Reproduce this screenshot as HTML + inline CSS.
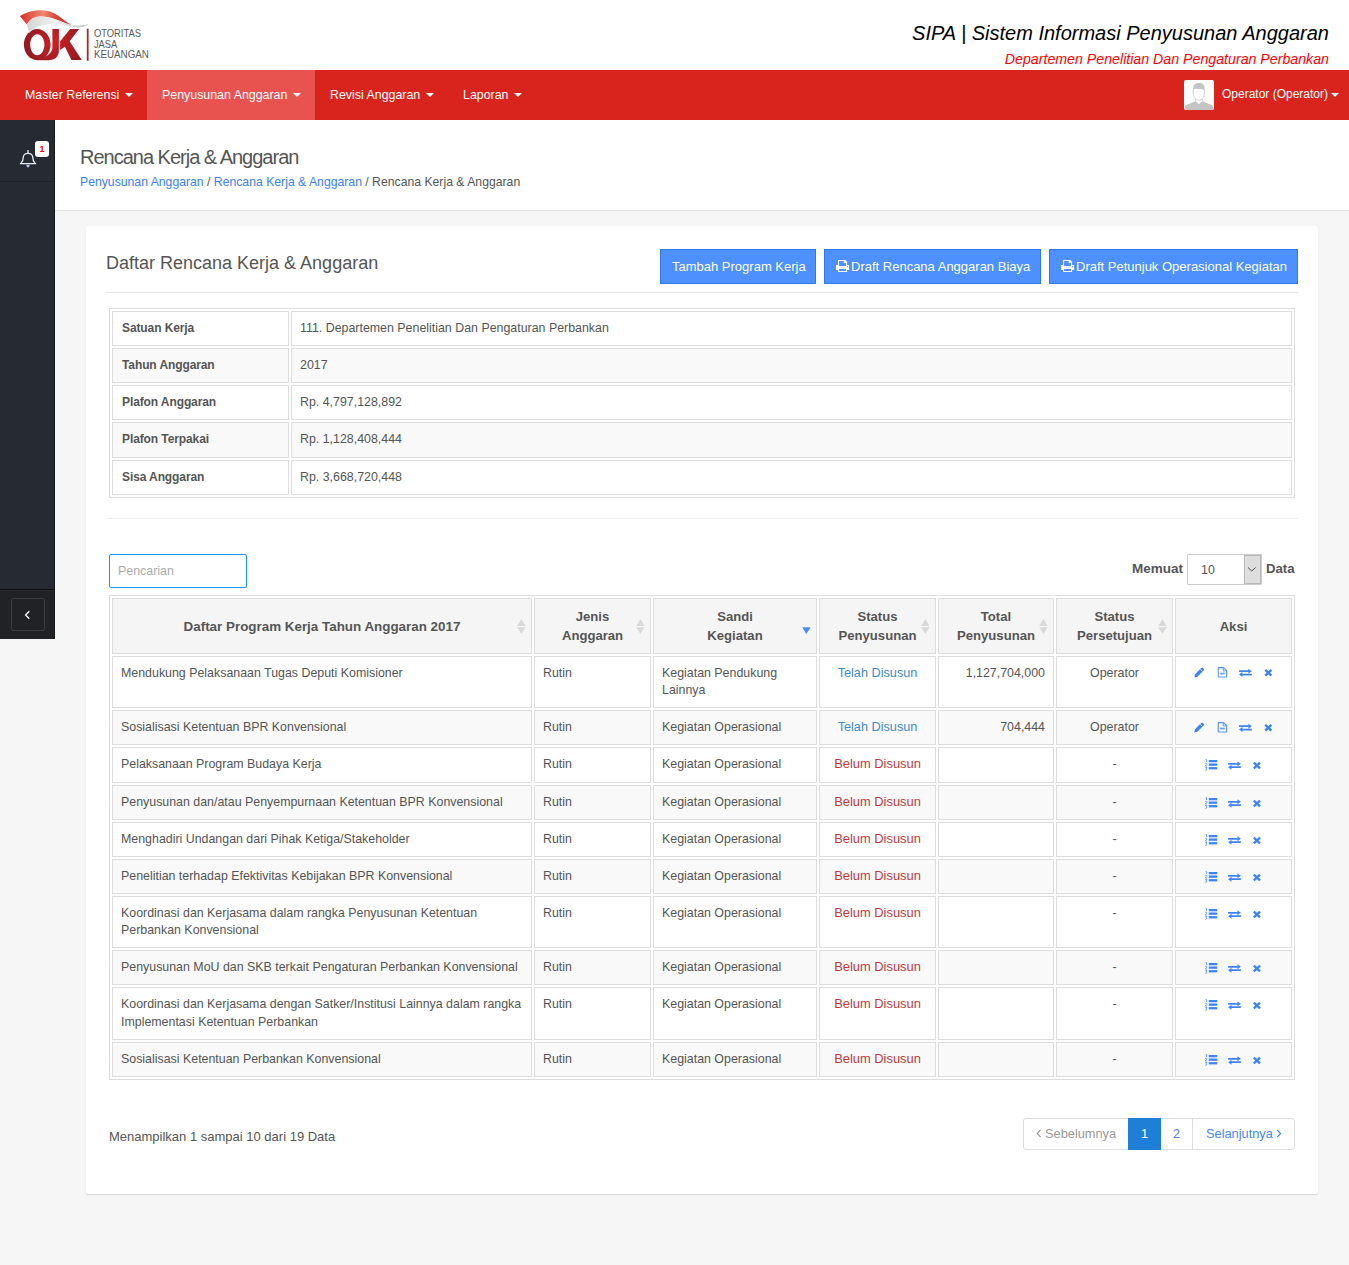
<!DOCTYPE html>
<html><head><meta charset="utf-8">
<style>
*{box-sizing:border-box;margin:0;padding:0}
html,body{width:1349px;height:1265px;overflow:hidden}
body{font-family:"Liberation Sans",sans-serif;font-size:12px;color:#555;background:#f6f6f6;position:relative}
.abs{position:absolute;white-space:nowrap}
.hdr{position:absolute;left:0;top:0;width:1349px;height:70px;background:#fff}
.t1{right:20px;top:21px;font-size:20px;font-style:italic;color:#000;line-height:24px}
.t2{right:20px;top:51px;font-size:14.2px;font-style:italic;color:#f00;line-height:17px}
.nav{position:absolute;left:0;top:70px;width:1349px;height:50px;background:#d9231d}
.nav .it{position:absolute;top:0;height:50px;line-height:50px;color:#fff;font-size:12.4px;padding:0 15px;white-space:nowrap}
.nav .it.act{background:#e8534f}
.caret{display:inline-block;width:0;height:0;border-left:4px solid transparent;border-right:4px solid transparent;border-top:4px solid #fff;vertical-align:middle;margin-left:6px;position:relative;top:-1px}
.side{position:absolute;left:0;top:120px;width:55px;height:519px;background:#262a33;border-right:1px solid #16181c}
.side .div1{position:absolute;left:0;top:61px;width:54px;height:1px;background:#1d2026}
.side .bot{position:absolute;left:0;top:469px;width:54px;height:50px;background:#202226;border-top:1px solid #0f1013;box-shadow:inset 0 1px 0 #2a2c30}
.side .btn{position:absolute;left:11px;top:8px;width:34px;height:33px;border:1px solid #3a3c41;border-radius:2px}
.ph{position:absolute;left:55px;top:120px;width:1294px;height:91px;background:#fff;border-bottom:1px solid #e3e3e3}
.ptitle{left:80px;top:145px;font-size:20px;letter-spacing:-1px;color:#555;line-height:24px}
.bc{left:80px;top:174px;font-size:12.23px;line-height:17px;color:#555}
.bc a{color:#3a80f6}
.card{position:absolute;left:86px;top:226px;width:1232px;height:968px;background:#fff;border-radius:2px;box-shadow:0 1px 1px rgba(0,0,0,.13),0 0 1px rgba(0,0,0,.06)}
.ctitle{left:106px;top:253px;font-size:18px;color:#555;line-height:21px}
.btnp{position:absolute;top:249px;height:35px;background:#4d90fe;border:1px solid #3079ed;color:#fff;font-size:13px;line-height:33px;padding-left:11px;white-space:nowrap}
.btnp svg{position:absolute;top:11px}
.hr1{position:absolute;left:106px;top:292px;width:1192px;height:1px;background:#e3e3e3}
.hr2{position:absolute;left:106px;top:518px;width:1192px;height:1px;background:#eee}
table{border-collapse:separate;border-spacing:2px;border:1px solid #ddd;table-layout:fixed;position:absolute}
td,th{border:1px solid #ddd;padding:8px;line-height:17.143px;vertical-align:top;text-align:left;white-space:nowrap;overflow:hidden}
.info{left:109px;top:308px;width:1186px}
.info td{font-size:12.4px;height:35.143px}
.info td.l{font-weight:bold;font-size:12px;letter-spacing:-0.1px;color:#555;text-indent:1px}
.info tr:nth-child(even) td{background:#f9f9f9}
.search{position:absolute;left:109px;top:554px;width:138px;height:34px;border:1px solid #2393f3;border-radius:2px}
.search span{position:absolute;left:8px;top:7.5px;font-size:12.4px;color:#aaa;line-height:17px}
.memuat{position:absolute;top:560px;font-weight:bold;font-size:13.2px;color:#555;line-height:17px}
.sel{position:absolute;left:1187px;top:554px;width:75px;height:31px;border:1px solid #ccc;border-radius:1px;background:#fff}
.sel .v{position:absolute;left:13px;top:7px;font-size:12.4px;line-height:17px;color:#555}
.sel .dd{position:absolute;left:56px;top:0;width:17px;height:29px;background:#dedede;border:1.5px solid #b8b8b8}
.main{left:109px;top:595px;width:1186px}
.main th{padding:9px 8px 7px;background:#f5f5f5;font-size:13.1px;font-weight:bold;text-align:center;vertical-align:middle;line-height:18.57px;color:#555;position:relative;height:56px}
.main td{font-size:12.4px}
.main tbody tr:nth-child(even) td{background:#f9f9f9}
.c{text-align:center!important}
.r{text-align:right!important}
.wrap{white-space:normal!important}
.sorti{position:absolute;right:5px;top:50%;margin-top:-6.6px}
.tel{color:#428bca;font-size:12.7px;vertical-align:top}
.bel{color:#be3a41;font-size:12.9px;vertical-align:top;position:relative;top:-1px}
.ic{display:inline-block;vertical-align:top;margin-top:3px}
.foot{left:109px;top:1128px;font-size:13px;line-height:18px;color:#555}
.pag{position:absolute;left:1023px;top:1118px;height:32px;width:272px;border:1px solid #ddd;border-radius:3px;background:#fff;font-size:12.8px;line-height:30px}
.pag div{position:absolute;top:0;height:30px;white-space:nowrap}
</style></head>
<body>
<svg width="0" height="0" style="position:absolute">
<defs>
 <g id="pencil"><path d="M0.3 10.4 L1 7.3 L7.2 1.1 C7.7 0.6 8.5 0.6 9 1.1 L9.6 1.7 C10.1 2.2 10.1 3 9.6 3.5 L3.4 9.7 Z" fill="#3f84f5"/><path d="M6.2 2.1 L8.6 4.5" stroke="#fff" stroke-width="0.7"/></g>
 <g id="doc"><path d="M0.7 0.6 H6 L9 3.6 V10 H0.7 Z" fill="none" stroke="#5b95f6" stroke-width="1.1" stroke-linejoin="round"/><path d="M5.6 0.6 V3.9 H9" fill="none" stroke="#5b95f6" stroke-width="1"/><rect x="2.6" y="5.7" width="4.6" height="1.7" fill="#6a9ef7"/></g>
 <g id="exch"><path d="M0 2 H9.4 V0.4 L12.8 2.9 L9.4 5.4 V3.8 H0 Z M12.8 5.4 H3.4 V3.8 L0 6.3 L3.4 8.8 V7.2 H12.8 Z" fill="#3f84f5"/></g>
 <g id="times"><path d="M1.4 1.3 L7.6 7.1 M7.6 1.3 L1.4 7.1" stroke="#3f84f5" stroke-width="2.4" stroke-linecap="butt"/></g>
 <g id="listol"><path d="M0.6 0.6 H1.6 V3 M0.2 4.6 C0.6 4 1.9 4 1.9 4.9 C1.9 5.6 0.3 6.4 0.3 7 H2 M0.3 8.6 H1.9 L1 9.8 C2 9.8 2 11.6 0.3 11.4" fill="none" stroke="#3f84f5" stroke-width="0.8"/><rect x="3.8" y="1" width="8.4" height="2.3" fill="#3f84f5"/><rect x="3.8" y="4.5" width="8.4" height="2.3" fill="#3f84f5"/><rect x="3.8" y="8.1" width="8.4" height="2.3" fill="#3f84f5"/></g>
 <g id="i4"><use href="#pencil"/><use href="#doc" x="23.6"/><use href="#exch" x="45" y="1.3"/><use href="#times" x="69.8" y="1.6"/></g>
 <g id="i3"><use href="#listol"/><use href="#exch" x="23.1" y="1.9"/><use href="#times" x="47.4" y="2.3"/></g>
</defs></svg>
<div class="hdr">
  <svg class="abs" style="left:15px;top:5px" width="140" height="60" viewBox="15 5 140 60">
    <defs>
      <linearGradient id="rg" x1="0" y1="0" x2="1" y2="0"><stop offset="0" stop-color="#d8302b"/><stop offset=".45" stop-color="#f08a70"/><stop offset=".7" stop-color="#d6453a"/><stop offset="1" stop-color="#c32a26"/></linearGradient>
      <linearGradient id="wg" x1="0" y1="0" x2="1" y2="0"><stop offset="0" stop-color="#d2d5d6"/><stop offset=".45" stop-color="#f0f1f1"/><stop offset="1" stop-color="#b8bdbf"/></linearGradient>
      <radialGradient id="dg" cx="55" cy="42" r="30" gradientUnits="userSpaceOnUse"><stop offset="0" stop-color="#c92127"/><stop offset="1" stop-color="#931b20"/></radialGradient>
    </defs>
    <path fill-rule="evenodd" d="M37.2 29 C44.6 29 50.6 36 50.6 44.6 C50.6 53.2 44.6 60.2 37.2 60.2 C29.8 60.2 23.9 53.2 23.9 44.6 C23.9 36 29.8 29 37.2 29 Z M37.3 34.3 C33.4 34.3 30.2 39 30.2 44.75 C30.2 50.5 33.4 55.2 37.3 55.2 C41.2 55.2 44.4 50.5 44.4 44.75 C44.4 39 41.2 34.3 37.3 34.3 Z" fill="url(#dg)"/>
    <path d="M52.4 29 H58.9 V50.5 C58.9 56.5 55.5 60.2 48 60.2 L38 60.2 L38 58.2 C44 57.5 48.5 55.5 50.5 52.5 C51.8 51 52.4 49.5 52.4 47 Z" fill="url(#dg)"/>
    <path d="M60.1 41.2 L70.2 29 L79.1 29 L69.6 41.2 L81.8 59.9 L71.4 59.9 L64.9 46.8 L60.1 50.1 Z" fill="url(#dg)"/>
    <path d="M20 16.3 C24 13 32 10.3 41.7 10.3 C50 10.3 56 14 60 17 C64 20 68 23.5 71.9 25.2 C68 24 64 22.5 60 21 C54 18.5 47 16.6 40 16.6 C34 16.6 30 19.5 26.9 24.6 Z" fill="url(#rg)"/>
    <path d="M26.9 24.6 C30 19.5 34 16.6 40 16.6 C47 16.6 54 18.5 60 21 C66 23.5 70 25.5 76 25.6 C81 25.6 85 25 88.8 24 C85 27 81 27.6 77.3 27.5 C72 27.3 68 25.5 62 24.6 C56 23.8 50 23.8 46 24.4 C38 25.5 33 28.5 29.2 32.9 Z" fill="url(#wg)"/>
    <rect x="86.8" y="28.7" width="1.8" height="32" fill="#a42a2e"/>
    <text x="93.9" y="36.7" font-family="Liberation Sans" font-size="10.4" fill="#5a5a5a" textLength="47.1" lengthAdjust="spacingAndGlyphs">OTORITAS</text>
    <text x="93.9" y="47.5" font-family="Liberation Sans" font-size="10.4" fill="#5a5a5a" textLength="23.3" lengthAdjust="spacingAndGlyphs">JASA</text>
    <text x="93.9" y="57.9" font-family="Liberation Sans" font-size="10.4" fill="#5a5a5a" textLength="55" lengthAdjust="spacingAndGlyphs">KEUANGAN</text>
  </svg>
  <div class="abs t1">SIPA | Sistem Informasi Penyusunan Anggaran</div>
  <div class="abs t2">Departemen Penelitian Dan Pengaturan Perbankan</div>
</div>
<div class="nav">
  <div class="it" style="left:10px">Master Referensi<span class="caret"></span></div>
  <div class="it act" style="left:147px;width:168px">Penyusunan Anggaran<span class="caret"></span></div>
  <div class="it" style="left:315px">Revisi Anggaran<span class="caret"></span></div>
  <div class="it" style="left:448px">Laporan<span class="caret"></span></div>
  <svg class="abs" style="left:1184px;top:10px" width="30" height="30" viewBox="0 0 30 30">
    <rect width="30" height="30" rx="2" fill="#fff"/>
    <path d="M9 10 C9 5 11 3.1 15 3.1 C19 3.1 20.8 5 20.8 9.5 L20.8 10.3 C19 9.2 17 8.6 14 9.2 C12 8.4 10.5 8.6 9 10.3 Z" fill="#c4c4c4"/>
    <path d="M9.3 9.5 V14 C9.3 17 12 20.3 14.9 20.3 C17.8 20.3 20.5 17 20.5 14 V9.5" fill="none" stroke="#c4c4c4" stroke-width="0.75"/>
    <path d="M11.7 18.6 V21.6 M18.2 18.6 V21.6" stroke="#c4c4c4" stroke-width="0.75"/>
    <path d="M1 26 C3 24.5 7 23 11.8 21.3 L14.9 24.3 L18.1 21.3 C23 23 27 24.5 29.2 26 V28 C29.2 29.1 28.5 30 27.5 30 H2.5 C1.5 30 1 29.1 1 28 Z" fill="#c4c4c4"/>
  </svg>
  <div class="abs" style="left:1222px;top:16px;font-size:12px;line-height:17px;color:#fff">Operator (Operator)</div>
  <span class="caret" style="position:absolute;left:1331px;top:23px;margin:0"></span>
</div>
<div class="side">
  <svg class="abs" style="left:19px;top:29px" width="18" height="20" viewBox="0 0 18 20">
    <path d="M9 1 V4.3" stroke="#e6ebf5" stroke-width="1.3"/>
    <path d="M1.4 14.6 L2.4 13.6 C3.6 12.2 4.2 10.8 4.2 8.8 C4.2 6 6.2 4.4 9 4.4 C11.8 4.4 13.8 6 13.8 8.8 C13.8 10.8 14.4 12.2 15.6 13.6 L16.6 14.6 Z" fill="none" stroke="#e6ebf5" stroke-width="1.3" stroke-linejoin="round"/>
    <path d="M7.3 15.8 C7.3 17.2 8.1 18.4 9 18.4 C9.9 18.4 10.7 17.2 10.7 15.8 Z" fill="#b9c8ec"/>
  </svg>
  <div class="abs" style="left:35px;top:21px;width:14px;height:16px;background:#fff;border-radius:3px;color:#e00;font-weight:bold;font-size:9px;line-height:16px;text-align:center">1</div>
  <div class="div1"></div>
  <div class="bot"><div class="btn">
    <svg class="abs" style="left:11px;top:9.5px" width="10" height="12" viewBox="0 0 10 12"><path d="M6.3 2.2 L2.6 6 L6.3 9.8" fill="none" stroke="#fff" stroke-width="1.3"/></svg>
  </div></div>
</div>
<div class="ph"></div>
<div class="abs ptitle">Rencana Kerja &amp; Anggaran</div>
<div class="abs bc"><a>Penyusunan Anggaran</a> / <a>Rencana Kerja &amp; Anggaran</a> / Rencana Kerja &amp; Anggaran</div>

<div class="card"></div>
<div class="abs ctitle">Daftar Rencana Kerja &amp; Anggaran</div>
<div class="btnp" style="left:660px;width:156px">Tambah Program Kerja</div>
<div class="btnp" style="left:824px;width:217px;padding-left:26px">
  <svg style="left:11px;top:10px" width="14" height="13" viewBox="0 0 14 13"><path fill-rule="evenodd" d="M2 0 H9.3 L11.1 1.8 V4.9 H13.1 V10 H11.1 V12 H2 V10 H0 V4.9 H2 Z M3.1 1.1 H7.7 V3 H10 V6 H3.1 Z M3.1 9.1 H10 V10.9 H3.1 Z" fill="#fff"/><circle cx="11.6" cy="6.6" r="0.55" fill="#4d90fe"/></svg>Draft Rencana Anggaran Biaya</div>
<div class="btnp" style="left:1049px;width:249px;padding-left:26px">
  <svg style="left:11px;top:10px" width="14" height="13" viewBox="0 0 14 13"><path fill-rule="evenodd" d="M2 0 H9.3 L11.1 1.8 V4.9 H13.1 V10 H11.1 V12 H2 V10 H0 V4.9 H2 Z M3.1 1.1 H7.7 V3 H10 V6 H3.1 Z M3.1 9.1 H10 V10.9 H3.1 Z" fill="#fff"/><circle cx="11.6" cy="6.6" r="0.55" fill="#4d90fe"/></svg>Draft Petunjuk Operasional Kegiatan</div>
<div class="hr1"></div>

<table class="info">
  <colgroup><col style="width:177px"><col style="width:1001px"></colgroup>
  <tr><td class="l">Satuan Kerja</td><td>111. Departemen Penelitian Dan Pengaturan Perbankan</td></tr>
  <tr><td class="l">Tahun Anggaran</td><td>2017</td></tr>
  <tr><td class="l">Plafon Anggaran</td><td>Rp. 4,797,128,892</td></tr>
  <tr><td class="l">Plafon Terpakai</td><td>Rp. 1,128,408,444</td></tr>
  <tr><td class="l">Sisa Anggaran</td><td>Rp. 3,668,720,448</td></tr>
</table>
<div class="hr2"></div>

<div class="search"><span>Pencarian</span></div>
<div class="memuat" style="left:1132px;font-size:13.5px;top:559.5px">Memuat</div>
<div class="sel"><span class="v">10</span><div class="dd">
  <svg class="abs" style="left:2px;top:10px" width="10" height="7" viewBox="0 0 10 7"><path d="M1 1.5 L4.8 5 L8.6 1.5" fill="none" stroke="#444" stroke-width="0.9"/></svg>
</div></div>
<div class="memuat" style="left:1266px">Data</div>

<table class="main">
  <colgroup><col style="width:420px"><col style="width:117px"><col style="width:164px"><col style="width:117px"><col style="width:116px"><col style="width:117px"><col style="width:117px"></colgroup>
  <thead><tr>
    <th style="font-size:13.4px">Daftar Program Kerja Tahun Anggaran 2017<svg class="sorti" width="9" height="16" viewBox="0 0 9 16"><path d="M0.2 7 L4.4 0 L8.6 7 Z M0.2 8.2 H8.6 L4.4 15 Z" fill="#d9d9d9"/></svg></th>
    <th>Jenis<br>Anggaran<svg class="sorti" width="9" height="16" viewBox="0 0 9 16"><path d="M0.2 7 L4.4 0 L8.6 7 Z M0.2 8.2 H8.6 L4.4 15 Z" fill="#d9d9d9"/></svg></th>
    <th>Sandi<br>Kegiatan<svg class="sorti" width="9" height="16" viewBox="0 0 9 16"><path d="M0.2 8.2 H8.6 L4.4 15 Z" fill="#4a8ef5"/></svg></th>
    <th>Status<br>Penyusunan<svg class="sorti" width="9" height="16" viewBox="0 0 9 16"><path d="M0.2 7 L4.4 0 L8.6 7 Z M0.2 8.2 H8.6 L4.4 15 Z" fill="#d9d9d9"/></svg></th>
    <th>Total<br>Penyusunan<svg class="sorti" width="9" height="16" viewBox="0 0 9 16"><path d="M0.2 7 L4.4 0 L8.6 7 Z M0.2 8.2 H8.6 L4.4 15 Z" fill="#d9d9d9"/></svg></th>
    <th>Status<br>Persetujuan<svg class="sorti" width="9" height="16" viewBox="0 0 9 16"><path d="M0.2 7 L4.4 0 L8.6 7 Z M0.2 8.2 H8.6 L4.4 15 Z" fill="#d9d9d9"/></svg></th>
    <th>Aksi</th>
  </tr></thead>
  <tbody>
  <tr><td>Mendukung Pelaksanaan Tugas Deputi Komisioner</td><td>Rutin</td><td>Kegiatan Pendukung<br>Lainnya</td><td class="c"><span class="tel">Telah Disusun</span></td><td class="r">1,127,704,000</td><td class="c">Operator</td><td class="c"><svg class="ic" style="margin-top:2.3px" width="80" height="12"><use href="#i4"/></svg></td></tr>
  <tr><td>Sosialisasi Ketentuan BPR Konvensional</td><td>Rutin</td><td>Kegiatan Operasional</td><td class="c"><span class="tel">Telah Disusun</span></td><td class="r">704,444</td><td class="c">Operator</td><td class="c"><svg class="ic" style="margin-top:2.3px" width="80" height="12"><use href="#i4"/></svg></td></tr>
  <tr><td>Pelaksanaan Program Budaya Kerja</td><td>Rutin</td><td>Kegiatan Operasional</td><td class="c"><span class="bel">Belum Disusun</span></td><td class="r"></td><td class="c">-</td><td class="c"><svg class="ic" width="57" height="12"><use href="#i3"/></svg></td></tr>
  <tr><td>Penyusunan dan/atau Penyempurnaan Ketentuan BPR Konvensional</td><td>Rutin</td><td>Kegiatan Operasional</td><td class="c"><span class="bel">Belum Disusun</span></td><td class="r"></td><td class="c">-</td><td class="c"><svg class="ic" width="57" height="12"><use href="#i3"/></svg></td></tr>
  <tr><td>Menghadiri Undangan dari Pihak Ketiga/Stakeholder</td><td>Rutin</td><td>Kegiatan Operasional</td><td class="c"><span class="bel">Belum Disusun</span></td><td class="r"></td><td class="c">-</td><td class="c"><svg class="ic" width="57" height="12"><use href="#i3"/></svg></td></tr>
  <tr><td>Penelitian terhadap Efektivitas Kebijakan BPR Konvensional</td><td>Rutin</td><td>Kegiatan Operasional</td><td class="c"><span class="bel">Belum Disusun</span></td><td class="r"></td><td class="c">-</td><td class="c"><svg class="ic" width="57" height="12"><use href="#i3"/></svg></td></tr>
  <tr><td>Koordinasi dan Kerjasama dalam rangka Penyusunan Ketentuan<br>Perbankan Konvensional</td><td>Rutin</td><td>Kegiatan Operasional</td><td class="c"><span class="bel">Belum Disusun</span></td><td class="r"></td><td class="c">-</td><td class="c"><svg class="ic" width="57" height="12"><use href="#i3"/></svg></td></tr>
  <tr><td>Penyusunan MoU dan SKB terkait Pengaturan Perbankan Konvensional</td><td>Rutin</td><td>Kegiatan Operasional</td><td class="c"><span class="bel">Belum Disusun</span></td><td class="r"></td><td class="c">-</td><td class="c"><svg class="ic" width="57" height="12"><use href="#i3"/></svg></td></tr>
  <tr><td>Koordinasi dan Kerjasama dengan Satker/Institusi Lainnya dalam rangka<br>Implementasi Ketentuan Perbankan</td><td>Rutin</td><td>Kegiatan Operasional</td><td class="c"><span class="bel">Belum Disusun</span></td><td class="r"></td><td class="c">-</td><td class="c"><svg class="ic" width="57" height="12"><use href="#i3"/></svg></td></tr>
  <tr><td>Sosialisasi Ketentuan Perbankan Konvensional</td><td>Rutin</td><td>Kegiatan Operasional</td><td class="c"><span class="bel">Belum Disusun</span></td><td class="r"></td><td class="c">-</td><td class="c"><svg class="ic" width="57" height="12"><use href="#i3"/></svg></td></tr>
  </tbody>
</table>

<div class="abs foot">Menampilkan 1 sampai 10 dari 19 Data</div>
<div class="pag">
  <div style="left:0;width:105px;color:#999;padding-left:12px"><svg style="display:inline-block;vertical-align:top;margin-top:10px;margin-right:3px" width="6" height="9" viewBox="0 0 6 9"><path d="M4.6 0.8 L1.2 4.5 L4.6 8.2" fill="none" stroke="#999" stroke-width="1.15"/></svg>Sebelumnya</div>
  <div style="left:104px;width:33px;background:#1f7fd6;color:#fff;text-align:center;top:-1px;height:32px;line-height:32px">1</div>
  <div style="left:137px;width:32px;border-right:1px solid #ddd;color:#4a86f0;text-align:center">2</div>
  <div style="left:182px;color:#4a86f0">Selanjutnya<svg style="display:inline-block;vertical-align:top;margin-top:10px;margin-left:3px" width="6" height="9" viewBox="0 0 6 9"><path d="M1.2 0.8 L4.6 4.5 L1.2 8.2" fill="none" stroke="#3a80f6" stroke-width="1.15"/></svg></div>
</div>
</body></html>
